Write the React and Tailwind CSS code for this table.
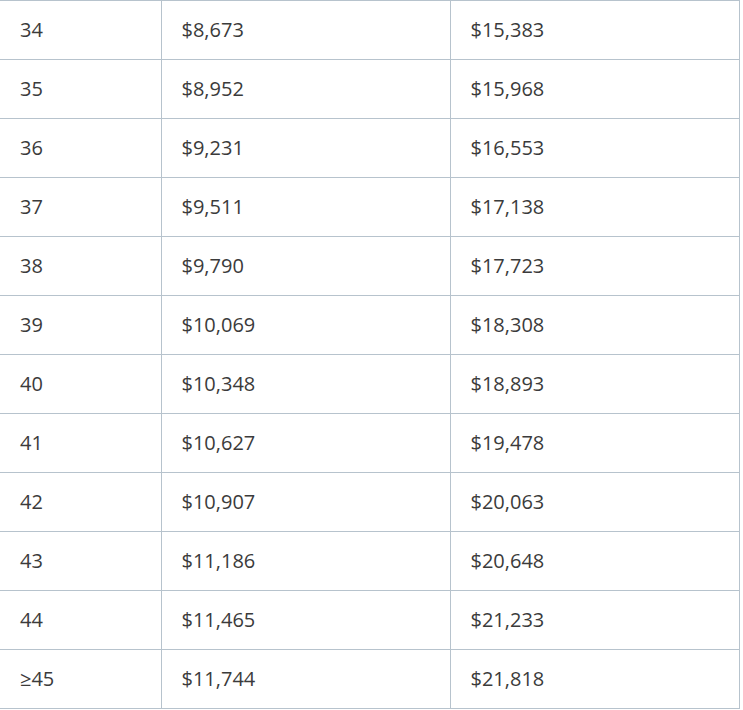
import React from 'react'

const rows = [
    ['34', '$8,673', '$15,383'],
    ['35', '$8,952', '$15,968'],
    ['36', '$9,231', '$16,553'],
    ['37', '$9,511', '$17,138'],
    ['38', '$9,790', '$17,723'],
    ['39', '$10,069', '$18,308'],
    ['40', '$10,348', '$18,893'],
    ['41', '$10,627', '$19,478'],
    ['42', '$10,907', '$20,063'],
    ['43', '$11,186', '$20,648'],
    ['44', '$11,465', '$21,233'],
    ['≥45', '$11,744', '$21,818'],
]

const App = () => {
    return (
        <div className="bg-white min-h-screen font-['Open_Sans',sans-serif] text-[#3b3b3b]">
            <table className="w-[740px] border-collapse text-[20px]">
                <tbody>
                    {rows.map((r) => (
                        <tr key={r[0]} className="h-[59px]">
                            <td className="w-[161px] border border-l-0 border-[#b7c3cd] pl-5 align-middle">{r[0]}</td>
                            <td className="w-[289px] border border-[#b7c3cd] pl-5 align-middle">{r[1]}</td>
                            <td className="border border-[#b7c3cd] pl-5 align-middle">{r[2]}</td>
                        </tr>
                    ))}
                </tbody>
            </table>
        </div>
    )
}

export default App
